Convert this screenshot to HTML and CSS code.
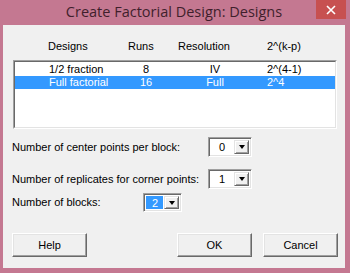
FILE: index.html
```html
<!doctype html>
<html>

<head>
  <meta charset="UTF-8">
  <title>Create Factorial Design: Designs</title>
  <link rel="stylesheet" href="styles.css">
</head>

<body>
  <div class="window">
    <div class="titlebar">
      <span class="title">Create Factorial Design: Designs</span>
      <span class="close">
        <svg width="10" height="10" viewBox="0 0 10 10">
          <path d="M1 1 L9 9 M9 1 L1 9" stroke="#fff" stroke-width="1.6" />
        </svg>
      </span>
    </div>

    <div class="client">
      <div class="list-head">
        <span>Designs</span>
        <span>Runs</span>
        <span>Resolution</span>
        <span>2^(k-p)</span>
      </div>

      <div class="listbox">
        <div class="listbox-inner">
          <div class="list-row">
            <span>1/2 fraction</span>
            <span class="center">8</span>
            <span class="center">IV</span>
            <span class="last">2^(4-1)</span>
          </div>
          <div class="list-row selected">
            <span>Full factorial</span>
            <span class="center">16</span>
            <span class="center">Full</span>
            <span class="last">2^4</span>
          </div>
        </div>
      </div>

      <div class="field first">
        <span class="field-label">Number of center points per block:</span>
        <div class="combo">
          <span class="combo-value">0</span>
          <span class="combo-btn"><span class="arrow"></span></span>
        </div>
      </div>

      <div class="field second">
        <span class="field-label">Number of replicates for corner points:</span>
        <div class="combo">
          <span class="combo-value">1</span>
          <span class="combo-btn"><span class="arrow"></span></span>
        </div>
      </div>

      <div class="field third">
        <span class="field-label short">Number of blocks:</span>
        <div class="combo small">
          <span class="combo-value focused">2</span>
          <span class="combo-btn"><span class="arrow"></span></span>
        </div>
      </div>

      <div class="buttons">
        <button class="btn">Help</button>
        <div class="btn-group">
          <button class="btn">OK</button>
          <button class="btn">Cancel</button>
        </div>
      </div>
    </div>
  </div>
</body>

</html>
```

FILE: styles.css
```css
body {
  margin: 0;
  background: #c47891;
  font: normal 11px/13px "Liberation Sans", sans-serif;
  color: #000;
}

.window {
  width: 350px;
  height: 273px;
  padding: 0 5px 5px 3px;
  box-sizing: border-box;
  display: flex;
  flex-direction: column;
}

.titlebar {
  height: 25px;
  position: relative;
  display: flex;
  align-items: center;
  justify-content: center;
}

.title {
  font: normal 14.5px/1 "Open Sans", sans-serif;
  color: #3f1f2c;
  margin-top: -1px;
}

/* close button sits over the title bar */
.close {
  position: absolute;
  top: 0;
  right: -1px;
  width: 30px;
  height: 19px;
  background: #c75050;
  display: flex;
  align-items: center;
  justify-content: center;
}

.client {
  flex: 1;
  background: #f0f0f0;
  padding-top: 15px;
}

.list-head {
  display: grid;
  grid-template-columns: 80px 50px 89px 1fr;
  padding-left: 45px;
  height: 13px;
}

.listbox {
  margin: 7px 0 0 10px;
  width: 324px;
  height: 69px;
  box-sizing: border-box;
  border: 1px solid;
  border-color: #a0a0a0 #fff #fff #a0a0a0;
}

.listbox-inner {
  height: 100%;
  box-sizing: border-box;
  border: 1px solid;
  border-color: #696969 #e3e3e3 #e3e3e3 #696969;
  background: #fff;
  padding-top: 1px;
}

.list-row {
  display: grid;
  grid-template-columns: 72px 50px 88px 1fr;
  padding-left: 34px;
  height: 13px;
}

.list-row .center {
  text-align: center;
}

.list-row .last {
  padding-left: 8px;
}

.list-row.selected {
  background: #3399ff;
  color: #fff;
}

.field {
  display: flex;
  align-items: center;
  padding-left: 9px;
}

.field.first {
  margin-top: 8px;
}

.field.second {
  margin-top: 12px;
}

.field.third {
  margin-top: 4px;
}

.field-label {
  width: 196px;
}

.field-label.short {
  width: 131px;
}

.combo {
  width: 44px;
  height: 20px;
  box-sizing: border-box;
  border: 1px solid;
  border-color: #a0a0a0 #fff #fff #a0a0a0;
  box-shadow: inset 1px 1px #696969, inset -1px -1px #e3e3e3;
  background: #fff;
  display: flex;
  padding: 2px;
}

.combo.small {
  width: 39px;
  height: 19px;
}

.combo-value {
  flex: 1;
  padding-left: 8px;
  line-height: 15px;
}

.combo-value.focused {
  background: #3399ff;
  color: #fff;
  margin-right: 1px;
  padding-left: 6px;
}

.combo-btn {
  width: 15px;
  box-sizing: border-box;
  background: #f0f0f0;
  border: 1px solid;
  border-color: #e3e3e3 #696969 #696969 #e3e3e3;
  box-shadow: inset 1px 1px #fff, inset -1px -1px #a0a0a0;
  display: flex;
  align-items: center;
  justify-content: center;
}

.arrow {
  width: 0;
  height: 0;
  border-left: 3.5px solid transparent;
  border-right: 3.5px solid transparent;
  border-top: 4px solid #000;
}

.buttons {
  display: flex;
  justify-content: space-between;
  padding: 0 7px 0 9px;
  margin-top: 21px;
}

.btn-group {
  display: flex;
  gap: 11px;
}

.btn {
  width: 75px;
  height: 24px;
  font: inherit;
  color: #000;
  background: #f0f0f0;
  border: 1px solid;
  border-color: #fff #696969 #696969 #fff;
  box-shadow: inset -1px -1px #a0a0a0, inset 1px 1px #e3e3e3;
  padding: 0;
}
```
